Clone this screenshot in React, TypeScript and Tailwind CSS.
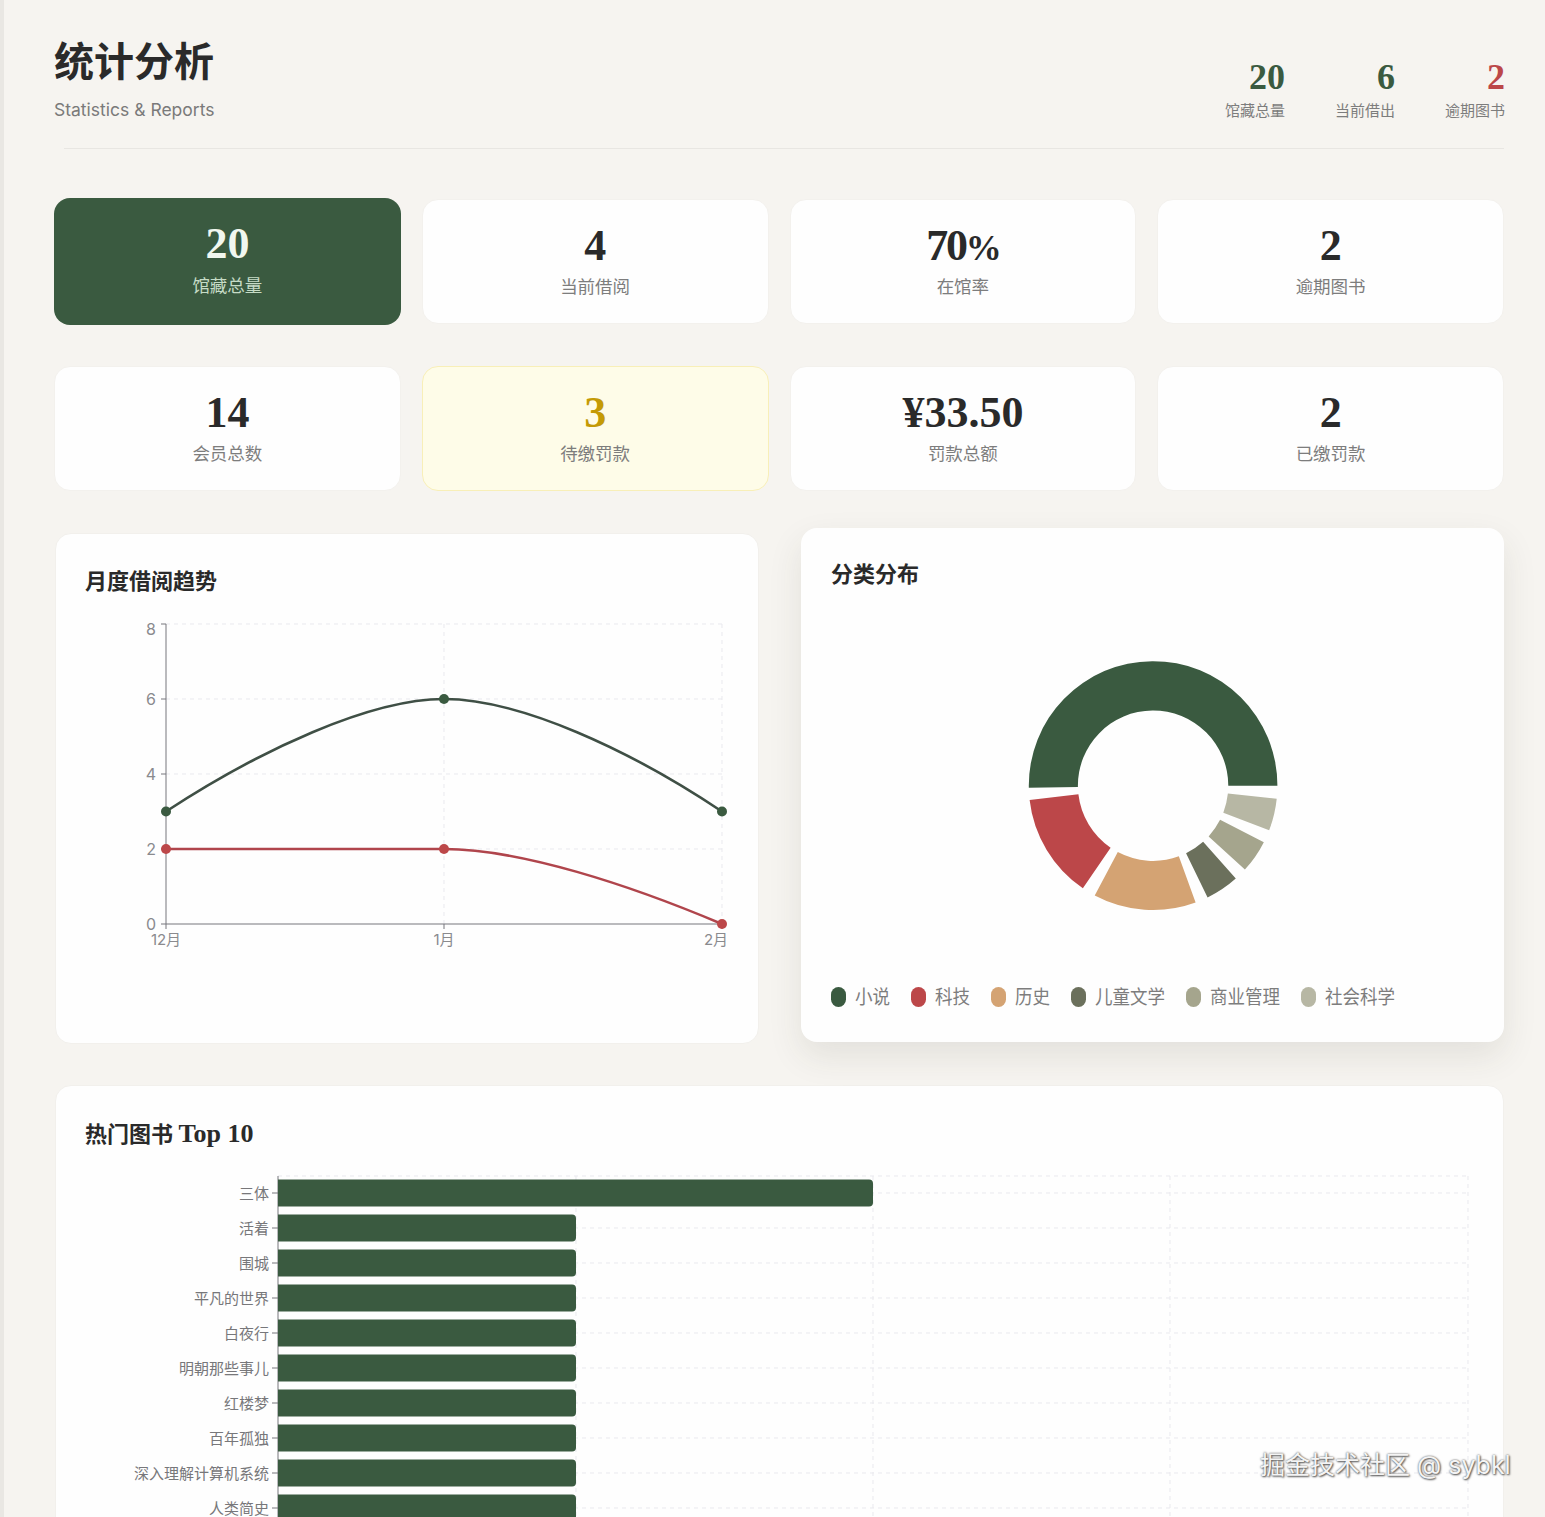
import React from 'react';

const serif = "font-['Liberation_Serif','Noto_Sans_CJK_SC',serif]";

const HEADER_STATS = [
  { value: '20', label: '馆藏总量', color: 'text-[#3a5a40]' },
  { value: '6', label: '当前借出', color: 'text-[#3a5a40]' },
  { value: '2', label: '逾期图书', color: 'text-[#bc4749]' },
];

const CARDS = [
  { value: '20', label: '馆藏总量', tone: 'primary' },
  { value: '4', label: '当前借阅', tone: 'plain', top: true },
  { value: <span className="tracking-[-0.05em]">70<span className="text-[36px]">%</span></span>, label: '在馆率', tone: 'plain', top: true },
  { value: '2', label: '逾期图书', tone: 'plain', top: true },
  { value: '14', label: '会员总数', tone: 'plain' },
  { value: '3', label: '待缴罚款', tone: 'warn' },
  { value: '¥33.50', label: '罚款总额', tone: 'plain' },
  { value: '2', label: '已缴罚款', tone: 'plain' },
];

const LEGEND = [
  { label: '小说', color: 'bg-[#3a5a40]' },
  { label: '科技', color: 'bg-[#bc4749]' },
  { label: '历史', color: 'bg-[#d4a373]' },
  { label: '儿童文学', color: 'bg-[#6b705c]' },
  { label: '商业管理', color: 'bg-[#a5a58d]' },
  { label: '社会科学', color: 'bg-[#b7b7a4]' },
];

const BOOKS = ['三体', '活着', '围城', '平凡的世界', '白夜行', '明朝那些事儿', '红楼梦', '百年孤独', '深入理解计算机系统', '人类简史'];

// angles are measured counter-clockwise from 3 o'clock
const SECTORS = [
  { from: 0, to: 180.9, color: '#3a5a40' },
  { from: 186.6, to: 235.6, color: '#bc4749' },
  { from: 242, to: 290, color: '#d4a373' },
  { from: 296, to: 311.7, color: '#6b705c' },
  { from: 317.6, to: 333, color: '#a5a58d' },
  { from: 339, to: 354, color: '#b7b7a4' },
];

function sectorPath(from: number, to: number) {
  const cx = 1152.6;
  const cy = 785.7;
  const R = 124.3;
  const r = 75.2;
  const pt = (rad: number, deg: number) => {
    const a = (deg * Math.PI) / 180;
    return `${(cx + rad * Math.cos(a)).toFixed(2)} ${(cy - rad * Math.sin(a)).toFixed(2)}`;
  };
  const large = to - from > 180 ? 1 : 0;
  return `M${pt(R, from)} A${R} ${R} 0 ${large} 0 ${pt(R, to)} L${pt(r, to)} A${r} ${r} 0 ${large} 1 ${pt(r, from)} Z`;
}

const LineChart = () => {
  const grid = '#e9e9ee';
  const axis = '#77777c';
  return (
    <svg viewBox="85 615 644 340" className="block w-[644px] h-[340px] mt-[18px]">
      {[624, 699, 774, 849].map((y) => (
        <line key={y} x1="166" x2="722" y1={y} y2={y} stroke={grid} strokeDasharray="4 4" />
      ))}
      {[444, 722].map((x) => (
        <line key={x} x1={x} x2={x} y1="624" y2="924" stroke={grid} strokeDasharray="4 4" />
      ))}
      <line x1="166" x2="166" y1="624" y2="924" stroke={axis} />
      <line x1="166" x2="722" y1="924" y2="924" stroke={axis} />
      {[624, 699, 774, 849, 924].map((y) => (
        <line key={y} x1="161" x2="166" y1={y} y2={y} stroke={axis} />
      ))}
      {[166, 444, 722].map((x) => (
        <line key={x} x1={x} x2={x} y1="924" y2="929" stroke={axis} />
      ))}
      {[['8', 629], ['6', 699], ['4', 774], ['2', 849], ['0', 924]].map(([t, y]) => (
        <text key={t} x="156" y={y} textAnchor="end" dominantBaseline="central" fontSize="16" fill="#8a8a8e">{t}</text>
      ))}
      <text x="166" y="939" textAnchor="middle" dominantBaseline="central" fontSize="15" fill="#8a8a8e">12月</text>
      <text x="444" y="939" textAnchor="middle" dominantBaseline="central" fontSize="15" fill="#8a8a8e">1月</text>
      <text x="716" y="939" textAnchor="middle" dominantBaseline="central" fontSize="15" fill="#8a8a8e">2月</text>
      <path d="M166 811.5 C260 750 370 699 444 699 C520 699 630 750 722 811.5" fill="none" stroke="#3f4f45" strokeWidth="2.6" />
      <path d="M166 849 L444 849 C520 849 630 885 722 924" fill="none" stroke="#b0454c" strokeWidth="2.6" />
      {[[166, 811.5], [444, 699], [722, 811.5]].map(([x, y]) => (
        <circle key={x} cx={x} cy={y} r="5" fill="#3a5a40" />
      ))}
      {[[166, 849], [444, 849], [722, 924]].map(([x, y]) => (
        <circle key={x} cx={x} cy={y} r="5" fill="#bc4749" />
      ))}
    </svg>
  );
};

const BarChart = () => {
  const grid = '#e9e9ee';
  const axis = '#77777c';
  return (
    <svg viewBox="85 1170 1400 347" className="block w-[1400px] h-[347px]">
      <line x1="278" x2="1468" y1="1176" y2="1176" stroke={grid} strokeDasharray="4 4" />
      {BOOKS.map((_, i) => (
        <line key={i} x1="278" x2="1468" y1={1193 + i * 35} y2={1193 + i * 35} stroke={grid} strokeDasharray="4 4" />
      ))}
      {[576, 873, 1170, 1468].map((x) => (
        <line key={x} x1={x} x2={x} y1="1176" y2="1517" stroke={grid} strokeDasharray="4 4" />
      ))}
      <line x1="278" x2="278" y1="1176" y2="1517" stroke={axis} />
      {BOOKS.map((name, i) => {
        const cy = 1193 + i * 35;
        const right = i === 0 ? 873 : 576;
        return (
          <g key={name}>
            <line x1="272" x2="278" y1={cy} y2={cy} stroke={axis} />
            <text x="269" y={cy} textAnchor="end" dominantBaseline="central" fontSize="15" fill="#77777a">{name}</text>
            <path
              d={`M278 ${cy - 13.5} H${right - 4} a4 4 0 0 1 4 4 V${cy + 9.5} a4 4 0 0 1 -4 4 H278 Z`}
              fill="#3a5a40"
            />
          </g>
        );
      })}
    </svg>
  );
};

export default function App() {
  return (
    <div className="relative h-[1517px] overflow-hidden bg-[#f6f4f0] border-l-[4px] border-[#e9e7e3] pl-[50px] pr-[41px] font-['Inter','Noto_Sans_CJK_SC',sans-serif]">
      <header className="flex items-end justify-between pt-[36px]">
        <div>
          <h1 className={`${serif} text-[40px] leading-[54px] font-bold text-[#2a2a2a]`}>统计分析</h1>
          <p className="mt-[8px] text-[17.5px] leading-6 text-[#7a7a7a]">Statistics &amp; Reports</p>
        </div>
        <div className="-mr-px flex gap-[50px] pb-px">
          {HEADER_STATS.map((s) => (
            <div key={s.label} className="text-right w-[60px]">
              <div className={`${serif} ${s.color} text-[36px] leading-[36px] font-bold`}>{s.value}</div>
              <div className="mt-[6px] text-[15px] leading-5 text-[#7d7d7d]">{s.label}</div>
            </div>
          ))}
        </div>
      </header>
      <div className="ml-[10px] mt-[26px] border-t border-[#e8e6e2]" />

      <section className="mt-[49px] grid grid-cols-4 gap-x-[21px] gap-y-[41px]">
        {CARDS.map((c, i) => (
          <div
            key={i}
            className={
              c.tone === 'primary'
                ? 'h-[127px] rounded-2xl bg-[#3a5a40] pt-[23px] text-center'
                : c.tone === 'warn'
                  ? 'h-[125px] rounded-2xl border border-[#f8efb8] bg-[#fefce8] pt-[23px] text-center'
                  : `h-[125px] rounded-2xl border border-[#f3f1ed] bg-[#fefefe] pt-[23px] text-center ${c.top ? 'mt-px' : ''}`
            }
          >
            <div
              className={`${serif} h-[46px] text-[44px] leading-[46px] font-bold ${
                c.tone === 'primary' ? 'text-[#f1f7ef]' : c.tone === 'warn' ? 'text-[#c49a06]' : 'text-[#2a2a2a]'
              }`}
            >
              {c.value}
            </div>
            <div className={`${c.tone === 'primary' ? 'mt-[7px] text-[#c6dcc6]' : 'mt-[6px] text-[#7d7d7d]'} text-[17.5px] leading-6`}>
              {c.label}
            </div>
          </div>
        ))}
      </section>

      <section className="mt-[42px] grid grid-cols-2 gap-[42px]">
        <div className="ml-px -mr-px h-[511px] rounded-2xl border border-[#f2f0ec] bg-[#fefefe] px-[29px] pt-[33px]">
          <h2 className={`${serif} text-[22px] leading-[30px] font-bold text-[#2a2a2a]`}>月度借阅趋势</h2>
          <LineChart />
        </div>
        <div className="ml-px -mt-[5px] h-[514px] rounded-2xl bg-[#fefefe] px-[30px] pt-[32px] shadow-[0_14px_34px_rgba(60,60,40,0.10)]">
          <h2 className={`${serif} text-[22px] leading-[30px] font-bold text-[#2a2a2a]`}>分类分布</h2>
          <svg viewBox="997.5 650 310 270" className="mx-auto block w-[310px] h-[270px] mt-[60px]">
            {SECTORS.map((s) => (
              <path key={s.from} d={sectorPath(s.from, s.to)} fill={s.color} />
            ))}
          </svg>
          <div className="mt-[65px] flex gap-[21px]">
            {LEGEND.map((l) => (
              <div key={l.label} className="flex items-center gap-[9px]">
                <span className={`h-[20px] w-[15px] rounded-full ${l.color}`} />
                <span className="text-[17.5px] leading-6 scale-y-110 text-[#7d7d7d]">{l.label}</span>
              </div>
            ))}
          </div>
        </div>
      </section>

      <section className="ml-px mt-[41px] rounded-t-2xl border border-[#f2f0ec] bg-[#fefefe] px-[29px] pt-[33px] h-[440px]">
        <h2 className={`${serif} text-[22px] leading-[30px] font-bold text-[#2a2a2a]`}>
          热门图书 <span className="text-[26px]">Top 10</span>
        </h2>
        <div className="mt-[20px]">
          <BarChart />
        </div>
      </section>

      <div className="absolute left-[1256px] top-[1449px] whitespace-nowrap text-[25px] leading-8 text-[#f4f4f4] [text-shadow:0_0_2px_#555,1px_1px_2px_#555]">
        掘金技术社区 @ sybkl
      </div>
    </div>
  );
}
